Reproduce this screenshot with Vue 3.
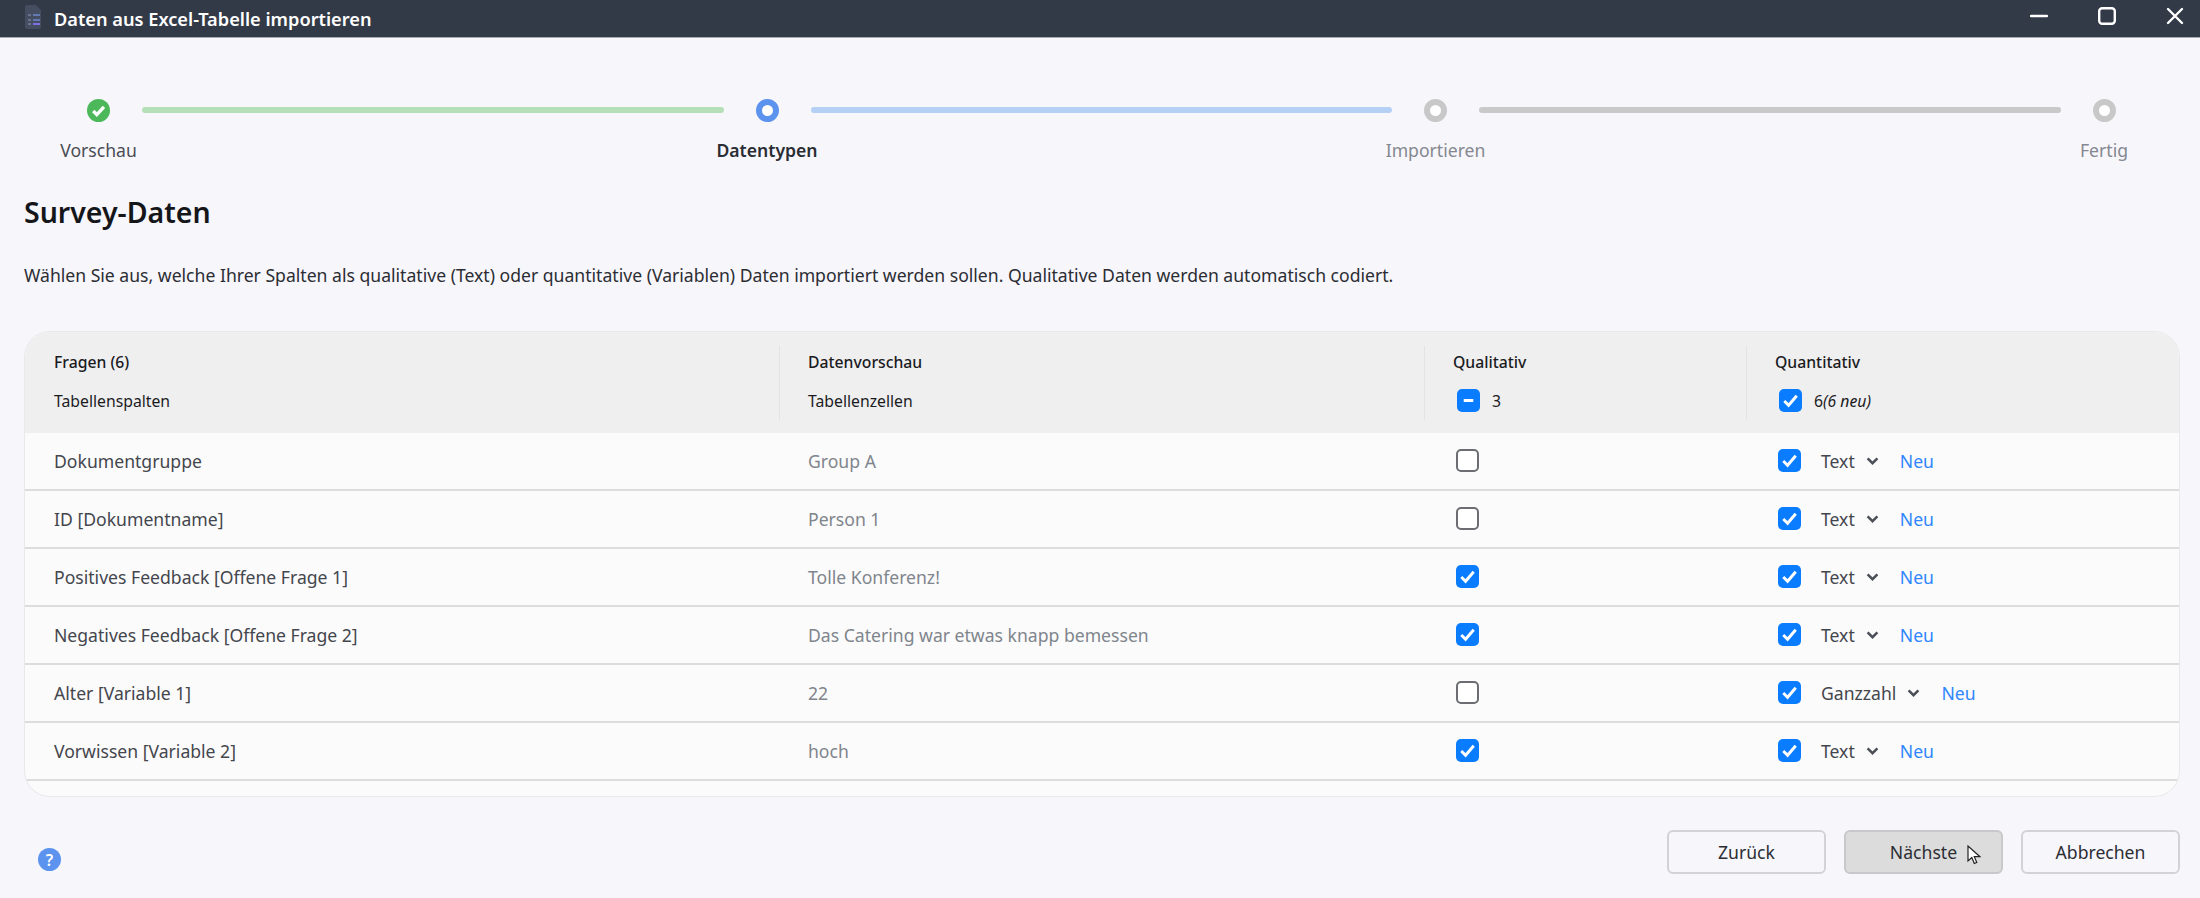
<script setup>
const steps = [
  { label: 'Vorschau', state: 'done' },
  { label: 'Datentypen', state: 'active' },
  { label: 'Importieren', state: 'todo' },
  { label: 'Fertig', state: 'todo' },
]

const rows = [
  { name: 'Dokumentgruppe', preview: 'Group A', qual: false, type: 'Text' },
  { name: 'ID [Dokumentname]', preview: 'Person 1', qual: false, type: 'Text' },
  { name: 'Positives Feedback [Offene Frage 1]', preview: 'Tolle Konferenz!', qual: true, type: 'Text' },
  { name: 'Negatives Feedback [Offene Frage 2]', preview: 'Das Catering war etwas knapp bemessen', qual: true, type: 'Text' },
  { name: 'Alter [Variable 1]', preview: '22', qual: false, type: 'Ganzzahl' },
  { name: 'Vorwissen [Variable 2]', preview: 'hoch', qual: true, type: 'Text' },
]
</script>

<template>
  <div class="window">
    <header class="titlebar">
      <svg class="app-icon" viewBox="0 0 16 24" aria-hidden="true">
        <path d="M2 0h9l5 5v17a2 2 0 0 1-2 2H2a2 2 0 0 1-2-2V2a2 2 0 0 1 2-2z" fill="#454d61" />
        <path d="M8 10h7M8 15h7" stroke="#6379b4" stroke-width="2" />
        <path d="M8 19h7" stroke="#7d6fe6" stroke-width="2" />
        <path d="M3 10h3M3 15h3M3 19h3" stroke="#76809c" stroke-width="1.500" />
      </svg>
      <span class="title">Daten aus Excel-Tabelle importieren</span>
      <div class="window-controls">
        <svg viewBox="0 0 18 18" aria-hidden="true"><path d="M1 9h16" stroke="#fff" stroke-width="2.4" stroke-linecap="round" /></svg>
        <svg viewBox="0 0 18 18" aria-hidden="true"><rect x="1.2" y="1.2" width="15.6" height="15.6" rx="3" fill="none" stroke="#fff" stroke-width="2.4" /></svg>
        <svg viewBox="0 0 18 18" aria-hidden="true"><path d="M2 2l14 14M16 2L2 16" stroke="#fff" stroke-width="2.4" stroke-linecap="round" /></svg>
      </div>
    </header>

    <nav class="steps">
      <template v-for="(step, i) in steps" :key="step.label">
        <div class="step" :class="step.state">
          <span class="dot">
            <svg v-if="step.state === 'done'" viewBox="0 0 24 24" aria-hidden="true">
              <path d="M6.500 12.500l3.800 3.800 7.400-8" fill="none" stroke="#fff" stroke-width="3.500" />
            </svg>
          </span>
          <span class="step-label">{{ step.label }}</span>
        </div>
        <div v-if="i < steps.length - 1" class="connector" :class="step.state"></div>
      </template>
    </nav>

    <main class="content">
      <h1>Survey-Daten</h1>
      <p class="intro">Wählen Sie aus, welche Ihrer Spalten als qualitative (Text) oder quantitative (Variablen) Daten importiert werden sollen. Qualitative Daten werden automatisch codiert.</p>

      <section class="table">
        <div class="table-head">
          <div class="head-cell">
            <strong>Fragen (6)</strong>
            <span>Tabellenspalten</span>
          </div>
          <div class="head-cell">
            <strong>Datenvorschau</strong>
            <span>Tabellenzellen</span>
          </div>
          <div class="head-cell">
            <strong>Qualitativ</strong>
            <span class="head-check">
              <span class="box on">
                <svg viewBox="0 0 24 24" aria-hidden="true"><path d="M7 12h10" stroke="#fff" stroke-width="3" /></svg>
              </span>
              <span>3</span>
            </span>
          </div>
          <div class="head-cell">
            <strong>Quantitativ</strong>
            <span class="head-check">
              <span class="box on">
                <svg viewBox="0 0 24 24" aria-hidden="true"><path d="M5.500 12.500l4.500 4.500 8.500-10" fill="none" stroke="#fff" stroke-width="3" /></svg>
              </span>
              <span>6<em>(6 neu)</em></span>
            </span>
          </div>
        </div>

        <div v-for="row in rows" :key="row.name" class="row">
          <div class="cell name">{{ row.name }}</div>
          <div class="cell preview">{{ row.preview }}</div>
          <div class="cell">
            <span class="box" :class="{ on: row.qual }">
              <svg v-if="row.qual" viewBox="0 0 24 24" aria-hidden="true"><path d="M5.500 12.500l4.500 4.500 8.500-10" fill="none" stroke="#fff" stroke-width="3" /></svg>
            </span>
          </div>
          <div class="cell">
            <span class="box on">
              <svg viewBox="0 0 24 24" aria-hidden="true"><path d="M5.500 12.500l4.500 4.500 8.500-10" fill="none" stroke="#fff" stroke-width="3" /></svg>
            </span>
            <span class="type">{{ row.type }}</span>
            <svg class="chevron" viewBox="0 0 14 9" aria-hidden="true"><path d="M1.500 1.500L7 7l5.500-5.500" fill="none" stroke="#4b4f57" stroke-width="2.800" /></svg>
            <span class="new">Neu</span>
          </div>
        </div>
      </section>
    </main>

    <footer class="footer">
      <span class="help">?</span>
      <div class="buttons">
        <button type="button">Zurück</button>
        <button type="button" class="hover">
          Nächste
          <svg class="cursor" viewBox="0 0 14 20" aria-hidden="true">
            <path d="M1 1v15l3.800-3.500 2.500 6 2.500-1-2.500-5.800H13z" fill="#fff" stroke="#222" stroke-width="1.200" />
          </svg>
        </button>
        <button type="button">Abbrechen</button>
      </div>
    </footer>
  </div>
</template>

<style scoped>
.window {
  display: flex;
  flex-direction: column;
  width: 2200px;
  height: 898px;
  overflow: hidden;
  color: #1b1b1f;
  background: #f7f6fb;
  font-family: "Noto Sans", Roboto, sans-serif;
  font-size: 17.6px;
}

.titlebar {
  display: flex;
  align-items: center;
  flex: none;
  height: 37px;
  padding-left: 25px;
  color: #fff;
  background: #333a47;
  border-bottom: 1px solid #a9abb2;
}

.app-icon {
  width: 16px;
  height: 24px;
  margin-bottom: 3px;
}

.title {
  margin-left: 13px;
  font-size: 18.2px;
  font-weight: 600;
}

.window-controls {
  display: flex;
  gap: 50px;
  margin-left: auto;
  margin-bottom: 5px;
  padding-right: 16px;
}

.window-controls svg {
  width: 18px;
  height: 18px;
}

.steps {
  display: flex;
  flex: none;
  height: 93px;
  padding: 60.5px 76px 0 78.5px;
}

.step {
  display: flex;
  flex: none;
  flex-direction: column;
  align-items: center;
  width: 40px;
}

.dot {
  display: block;
  flex: none;
  box-sizing: border-box;
  width: 23px;
  height: 23px;
  background: #fff;
  border: 6px solid #c8c8c8;
  border-radius: 50%;
}

.step.done .dot {
  background: #4cb85a;
  border: 0;
}

.step.active .dot {
  border-color: #5b93ee;
}

.dot svg {
  display: block;
  width: 23px;
  height: 23px;
}

.step-label {
  margin-top: 16.5px;
  color: #848890;
  line-height: 24px;
  white-space: nowrap;
}

.step.done .step-label {
  color: #4a4d55;
}

.step.active .step-label {
  color: #2a2d33;
  font-weight: 600;
}

.connector {
  flex: 1;
  height: 6px;
  margin: 8.500px 23.500px 0;
  background: #c9c9c9;
  border-radius: 3px;
}

.connector.done {
  background: #b5e0b7;
}

.connector.active {
  background: #b4d0f5;
}

.content {
  flex: 1;
  padding: 0 20px 0 24px;
}

h1 {
  margin: 0;
  color: #15161a;
  font-size: 28.5px;
  font-weight: 600;
  line-height: 40px;
}

.intro {
  margin: 31px 0 44px;
  color: #2b2d33;
  line-height: 24px;
}

.table {
  overflow: hidden;
  height: 466px;
  box-sizing: border-box;
  background: #fbfbfb;
  border: 1px solid #e9e9ec;
  border-radius: 26px;
}

.table-head,
.row {
  display: grid;
  grid-template-columns: 754px 645px 322px 1fr;
}

.table-head {
  height: 101px;
  padding-top: 14px;
  box-sizing: border-box;
  background: #efefef;
}

.head-cell {
  display: flex;
  flex-direction: column;
  gap: 13px;
  box-sizing: border-box;
  height: 74px;
  padding: 3px 0 0 28px;
  border-left: 1px solid #e3e3e5;
  font-size: 15.75px;
  line-height: 26px;
}

.head-cell:first-child {
  padding-left: 29px;
  border-left: 0;
}

.head-cell strong {
  font-weight: 500;
}

.head-check {
  display: flex;
  align-items: center;
  gap: 12px;
  padding-left: 4px;
}

.row {
  height: 58px;
  box-sizing: border-box;
  border-bottom: 2px solid #dcdcde;
}

.cell {
  display: flex;
  align-items: center;
  padding-left: 29px;
}

.name {
  color: #44464d;
}

.preview {
  color: #7f858c;
}

.box {
  display: block;
  flex: none;
  box-sizing: border-box;
  width: 23px;
  height: 23px;
  margin-left: 3px;
  background: #fff;
  border: 2px solid #6b6d73;
  border-radius: 5px;
}

.box.on {
  background: #0a7cff;
  border: 0;
}

.head-check .box {
  margin-left: 0;
}

.box svg {
  display: block;
  width: 23px;
  height: 23px;
}

.type {
  margin-left: 20px;
  color: #44464d;
}

.chevron {
  width: 13px;
  height: 8px;
  margin-left: 11px;
}

.new {
  margin-left: 21px;
  color: #2f86ff;
}

.footer {
  display: flex;
  align-items: flex-end;
  justify-content: space-between;
  flex: none;
  height: 44px;
  padding: 0 20px 24px 38px;
}

.help {
  display: flex;
  align-items: center;
  justify-content: center;
  width: 23px;
  height: 23px;
  margin-bottom: 3px;
  color: #fff;
  background: #5b93ee;
  border-radius: 50%;
  font-size: 16px;
  font-weight: 600;
}

.buttons {
  display: flex;
  gap: 18px;
}

button {
  position: relative;
  width: 159px;
  height: 44px;
  padding: 0;
  color: #2b2d33;
  background: #f7f6fb;
  border: 2px solid #d3d3d6;
  border-radius: 6px;
  font: inherit;
}

button.hover {
  background: #dcdcdc;
  border-color: #c8c8ca;
}

.cursor {
  position: absolute;
  top: 13px;
  left: 121px;
  width: 14px;
  height: 20px;
}
</style>

<style>
html,
body {
  margin: 0;
  background: #f7f6fb;
}
</style>
